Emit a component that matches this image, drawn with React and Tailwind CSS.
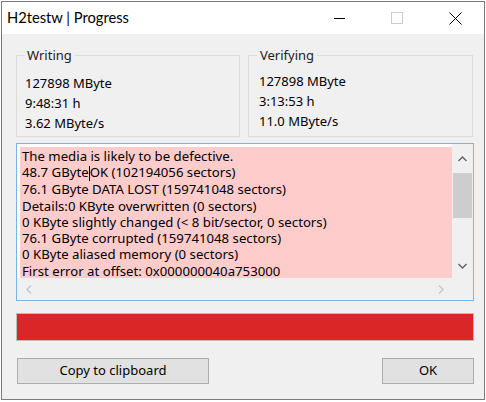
export default function App() {
  const lines = [
    "The media is likely to be defective.",
    null,
    "76.1 GByte DATA LOST (159741048 sectors)",
    "Details:0 KByte overwritten (0 sectors)",
    "0 KByte slightly changed (< 8 bit/sector, 0 sectors)",
    "76.1 GByte corrupted (159741048 sectors)",
    "0 KByte aliased memory (0 sectors)",
    "First error at offset: 0x000000040a753000",
  ];
  return (
    <div className="w-[486px] h-[402px] bg-white overflow-hidden pt-[1px] pl-[1px]" style={{ fontFamily: '"Noto Sans", sans-serif' }}>
      <div className="w-[484px] h-[399px] border border-[#7a7a7a] flex flex-col">
        {/* Title bar */}
        <div className="h-[32px] bg-white flex items-center shrink-0">
          <div className="flex-1 pl-[5px] text-[14.7px] text-black leading-none pb-[1px]" style={{ fontFamily: 'Lato, "Noto Sans", sans-serif' }}>H2testw | Progress</div>
          <div className="w-[58px] h-full flex items-center justify-center">
            <div className="w-[11px] h-[1px] bg-black" />
          </div>
          <div className="w-[58px] h-full flex items-center justify-center">
            <div className="w-[12px] h-[12px] border border-[#cccccc]" />
          </div>
          <div className="w-[58px] h-full flex items-center justify-center">
            <svg width="13" height="13" viewBox="0 0 13 13">
              <path d="M0.5 0.5 L12.5 12.5 M12.5 0.5 L0.5 12.5" stroke="#000" strokeWidth="1" />
            </svg>
          </div>
        </div>
        {/* Client */}
        <div className="flex-1 bg-[#f0f0f0] pl-[14px] pr-[10px] pt-[13px] flex flex-col">
          <div className="flex gap-[8px]">
            <fieldset className="w-[224px] h-[90px] border border-[#dcdcdc] text-[13px] text-black">
              <legend className="ml-[7px] px-[3px] text-[13px] leading-[16px] text-[#222]">Writing</legend>
              <div className="leading-[20px] pt-[10px] pl-[8px]">
                <div>127898 MByte</div>
                <div>9:48:31 h</div>
                <div>3.62 MByte/s</div>
              </div>
            </fieldset>
            <fieldset className="w-[225px] h-[90px] border border-[#dcdcdc] text-[13px] text-black">
              <legend className="ml-[8px] px-[3px] text-[13px] leading-[16px] text-[#222]">Verifying</legend>
              <div className="leading-[20px] pt-[8px] pl-[10px]">
                <div>127898 MByte</div>
                <div>3:13:53 h</div>
                <div>11.0 MByte/s</div>
              </div>
            </fieldset>
          </div>
          {/* Text box */}
          <div className="mt-[6px] h-[158px] border border-[#7ab4e8] bg-white flex flex-col">
            <div className="flex h-[134px]">
              <div className="flex-1 ml-[3px] mt-[3px] bg-[#ffcccc] pl-[2px] pt-[1px] text-[13.2px] leading-[16.3px] text-black whitespace-nowrap">
                {lines.map((l, i) =>
                  l === null ? (
                    <div key={i}>
                      48.7 GByte<span className="inline-block w-[1px] h-[15px] bg-black align-middle" />OK (102194056 sectors)
                    </div>
                  ) : (
                    <div key={i}>{l}</div>
                  )
                )}
              </div>
              <div className="w-[21px] bg-[#f0f0f0] flex flex-col items-center">
                <div className="h-[29px] flex items-center justify-center">
                  <svg width="9" height="6" viewBox="0 0 9 6"><path d="M0.5 5 L4.5 1 L8.5 5" fill="none" stroke="#606060" strokeWidth="1.3" /></svg>
                </div>
                <div className="w-[19px] h-[45px] bg-[#cdcdcd]" />
                <div className="flex-1" />
                <div className="h-[25px] flex items-center justify-center">
                  <svg width="9" height="6" viewBox="0 0 9 6"><path d="M0.5 1 L4.5 5 L8.5 1" fill="none" stroke="#606060" strokeWidth="1.3" /></svg>
                </div>
              </div>
            </div>
            <div className="flex-1 bg-[#f0f0f0] flex items-center justify-between pl-[9px] pr-[29px]">
              <svg width="6" height="9" viewBox="0 0 6 9"><path d="M5 0.5 L1 4.5 L5 8.5" fill="none" stroke="#c4c4c4" strokeWidth="1.3" /></svg>
              <svg width="6" height="9" viewBox="0 0 6 9"><path d="M1 0.5 L5 4.5 L1 8.5" fill="none" stroke="#c4c4c4" strokeWidth="1.3" /></svg>
            </div>
          </div>
          {/* Progress bar */}
          <div className="mt-[12px] h-[28px] bg-[#da2626] border border-[#bcbcbc]" />
          {/* Buttons */}
          <div className="mt-[17px] flex justify-between pl-[1px]">
            <button className="w-[192px] h-[26px] bg-[#e1e1e1] border border-[#adadad] text-[13px] text-black">Copy to clipboard</button>
            <button className="w-[92px] h-[26px] bg-[#e1e1e1] border border-[#adadad] text-[13px] text-black">OK</button>
          </div>
        </div>
      </div>
    </div>
  );
}
